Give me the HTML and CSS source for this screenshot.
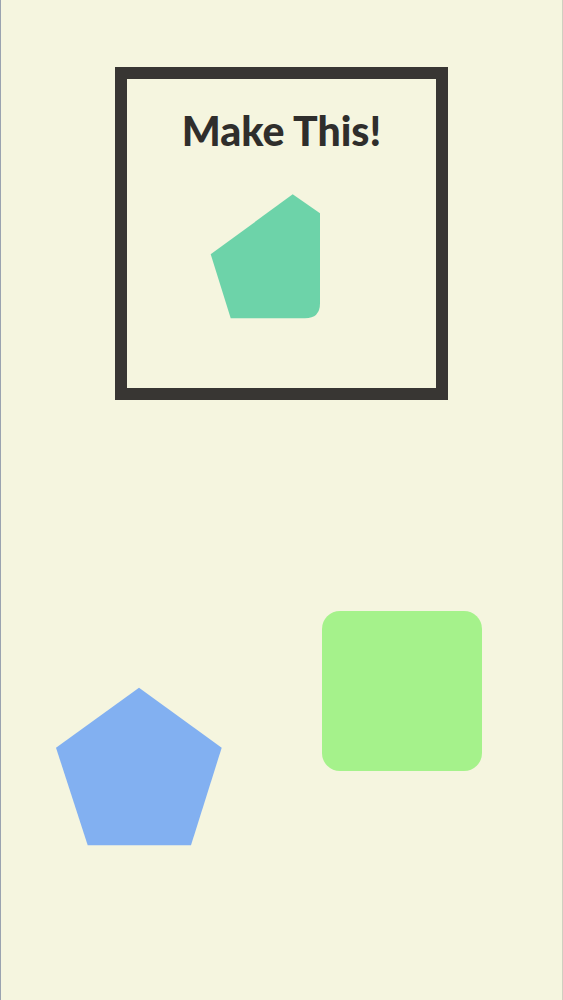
FILE: index.html
```html
<!DOCTYPE html>
<html lang="en">
<head>
  <meta charset="UTF-8">
  <title>Make This!</title>
  <link rel="stylesheet" href="styles.css">
</head>
<body>
  <div class="screen">
    <div class="target-frame">
      <h1 class="target-title">Make This!</h1>
      <svg class="target-shape" width="112" height="127" viewBox="0 0 112 127">
        <path d="M82.7 1.3 L110 20.3 L110 110.3 Q110 125.3 95 125.3 L20.7 125.3 L0.7 61.3 Z" fill="#6dd3a9"/>
      </svg>
    </div>

    <div class="tray">
      <svg class="piece piece-pentagon" width="166" height="159" viewBox="0 0 166 159">
        <path d="M83 0.7 L165.7 60.7 L135 158.3 L31.7 158.3 L0 60.7 Z" fill="#82b0f1"/>
      </svg>
      <div class="piece piece-square"></div>
    </div>
  </div>
</body>
</html>
```

FILE: styles.css
```css
body {
  margin: 0;
  background: #f5f5df;
  font-family: 'Lato', 'Open Sans', sans-serif;
}

.screen {
  min-height: 1000px;
  box-sizing: border-box;
  border-left: 1px solid #9aa3b0;
  border-right: 1px solid #cfcfc0;
  padding-top: 67px;
}

.target-frame {
  width: 333px;
  height: 333px;
  margin: 0 auto;
  box-sizing: border-box;
  border: 12px solid #383633;
  padding-top: 28px;
}

.target-title {
  margin: 0;
  font-size: 41px;
  font-weight: 900;
  line-height: 48px;
  color: #2f2e2c;
  text-align: center;
}

.target-shape {
  display: block;
  margin-top: 38px;
  margin-left: 83px;
}

.tray {
  display: flex;
  align-items: flex-start;
  gap: 100px;
  margin-top: 211px;
  padding-left: 55px;
}

.piece {
  display: block;
  flex-shrink: 0;
}

.piece-pentagon {
  margin-top: 76px;
}

.piece-square {
  width: 160px;
  height: 160px;
  border-radius: 18px;
  background: #a5f28b;
}
```
